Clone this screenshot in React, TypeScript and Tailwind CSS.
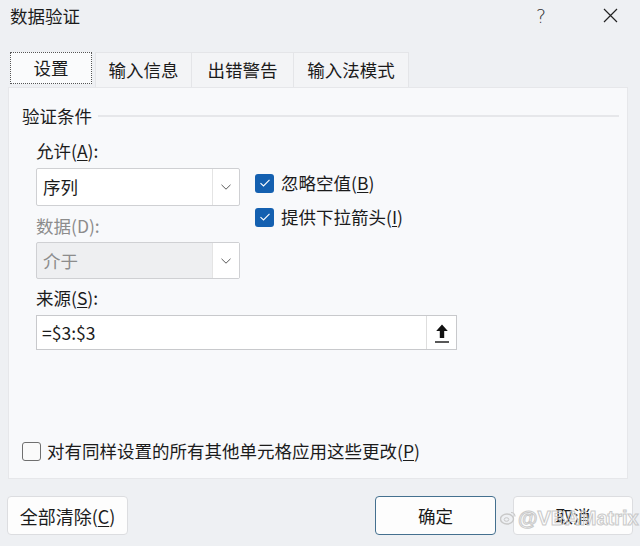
import React from "react";

const Chevron = () => (
  <svg width="12" height="8" viewBox="0 0 12 8" fill="none">
    <path d="M1.5 1.8 L6 6.2 L10.5 1.8" stroke="#5a5a5a" strokeWidth="1" />
  </svg>
);

const Check = ({ checked }: { checked: boolean }) =>
  checked ? (
    <div className="w-[19px] h-[19px] rounded-[3px] bg-[#1460b0] flex items-center justify-center">
      <svg width="12" height="10" viewBox="0 0 12 10" fill="none">
        <path d="M1.5 5.2 L4.5 8 L10.5 1.8" stroke="#ffffff" strokeWidth="1.1" />
      </svg>
    </div>
  ) : (
    <div className="w-[19px] h-[19px] rounded-[3px] border border-[#6f6f6f] bg-[#fafafa]" />
  );

export default function App() {
  return (
    <div
      className="relative w-[640px] h-[546px] overflow-hidden bg-[#eef0f3] text-[#1b1b1b] text-[17.5px] leading-[20px]"
      style={{ fontFamily: '"Noto Sans CJK SC", "Noto Sans", sans-serif' }}
    >
      {/* title bar */}
      <div className="h-[30px] flex items-center pl-[10px] pt-[1px]">
        <span className="text-[17.5px]">数据验证</span>
        <span
          className="ml-auto mr-[57px] text-[19px] text-[#333]"
          style={{ fontFamily: '"DejaVu Sans", sans-serif', fontWeight: 200 }}
        >
          ?
        </span>
        <svg className="mr-[22px]" width="15" height="15" viewBox="0 0 15 15" fill="none">
          <path d="M1 1 L14 14 M14 1 L1 14" stroke="#222" strokeWidth="1.2" />
        </svg>
      </div>

      {/* tabs */}
      <div className="mt-[22px] flex pl-[10px] h-[35px]">
        <div className="w-[82px] h-[32px] bg-[#fafbfc] border border-dotted border-[#555] flex items-center justify-center">
          设置
        </div>
        <div className="ml-[3px] w-[97px] h-[35px] bg-[#f3f4f6] border border-b-0 border-[#e4e5e8] flex items-center justify-center">
          输入信息
        </div>
        <div className="w-[102px] h-[35px] bg-[#f3f4f6] border border-l-0 border-b-0 border-[#e4e5e8] flex items-center justify-center">
          出错警告
        </div>
        <div className="w-[115px] h-[35px] bg-[#f3f4f6] border border-l-0 border-b-0 border-[#e4e5e8] flex items-center justify-center">
          输入法模式
        </div>
      </div>

      {/* panel */}
      <div className="ml-[8px] w-[620px] h-[392px] bg-[#f8f9fb] border border-[#e6e7ea] flex flex-col">
        <div className="mt-[18px] flex items-center pl-[13px] h-[20px]">
          <span>验证条件</span>
          <div className="ml-[6px] mr-[8px] flex-1 h-[2px] bg-[#e6e7ea]" />
        </div>

        <div className="pl-[27px] mt-[15px] flex">
          <div className="w-[204px] flex flex-col">
            <div className="h-[20px]">
              允许(<span className="underline underline-offset-2">A</span>):
            </div>
            <div className="mt-[7px] h-[38px] bg-white border border-[#cfd0d3] rounded-[2px] flex items-center">
              <span className="pl-[6px] flex-1">序列</span>
              <div className="w-[27px] h-full border-l border-[#e4e4e4] flex items-center justify-center">
                <Chevron />
              </div>
            </div>
            <div className="mt-[10px] h-[20px] text-[#8c8c8c]">数据(D):</div>
            <div className="mt-[6px] h-[37px] bg-[#eeeff1] border border-[#cfd0d3] rounded-[2px] flex items-center">
              <span className="pl-[6px] flex-1 text-[#8c8c8c]">介于</span>
              <div className="w-[27px] h-full bg-white border-l border-[#e4e4e4] flex items-center justify-center">
                <Chevron />
              </div>
            </div>
          </div>

          <div className="ml-[15px] mt-[32px] flex flex-col gap-[14px]">
            <div className="flex items-center h-[20px]">
              <Check checked />
              <span className="ml-[7px]">
                忽略空值(<span className="underline underline-offset-2">B</span>)
              </span>
            </div>
            <div className="flex items-center h-[20px]">
              <Check checked />
              <span className="ml-[7px]">
                提供下拉箭头(<span className="underline underline-offset-2">I</span>)
              </span>
            </div>
          </div>
        </div>

        <div className="pl-[27px] mt-[9px] h-[20px]">
          来源(<span className="underline underline-offset-2">S</span>):
        </div>
        <div className="ml-[27px] mt-[7px] w-[421px] h-[35px] bg-white border border-[#c8c9cc] flex items-center">
          <span className="pl-[5px] flex-1">=$3:$3</span>
          <div className="w-[30px] h-full border-l border-[#dedede] flex items-center justify-center">
            <svg width="16" height="22" viewBox="0 0 16 22" fill="none">
              <path d="M8 2.5 L2.2 9 H5.8 V16 H10.2 V9 H13.8 Z" fill="#111" />
              <path d="M1 20 H15" stroke="#111" strokeWidth="1.4" />
            </svg>
          </div>
        </div>

        <div className="mt-auto mb-[17px] ml-[13px] flex items-center h-[20px]">
          <Check checked={false} />
          <span className="ml-[6px]">
            对有同样设置的所有其他单元格应用这些更改(<span className="underline underline-offset-2">P</span>)
          </span>
        </div>
      </div>

      {/* buttons */}
      <div className="mt-[17px] flex items-start h-[40px]">
        <div className="ml-[7px] w-[121px] h-[39px] bg-[#fdfdfd] border border-[#dcdde0] rounded-[4px] flex items-center justify-center text-[18px]">
          全部清除(<span className="underline underline-offset-2">C</span>)
        </div>
        <div className="ml-[247px] w-[121px] h-[39px] bg-[#fdfdfd] border border-[#44708f] rounded-[4px] flex items-center justify-center">
          确定
        </div>
        <div className="ml-[17px] w-[120px] h-[39px] bg-[#fdfdfd] border border-[#dcdde0] rounded-[4px] flex items-center justify-center">
          取消
        </div>
      </div>

      {/* watermark */}
      <div
        className="absolute left-[500px] top-[508px] flex items-center gap-[2px] text-[20px] text-[#d2d2d2]"
        style={{ fontFamily: '"Liberation Sans", sans-serif' }}
      >
        <svg width="16" height="14" viewBox="0 0 16 14" fill="none">
          <ellipse cx="7" cy="8" rx="6.5" ry="5" stroke="#c8c8c8" strokeWidth="1.4" />
          <ellipse cx="6.5" cy="8.5" rx="2.3" ry="1.8" stroke="#c8c8c8" strokeWidth="1" />
          <path d="M11 1.5 A4 4 0 0 1 15 5.5" stroke="#c8c8c8" strokeWidth="1.2" />
        </svg>
        <span className="font-bold text-transparent [-webkit-text-stroke:1px_#c9c9c9]">@VBAMatrix</span>
      </div>
    </div>
  );
}
